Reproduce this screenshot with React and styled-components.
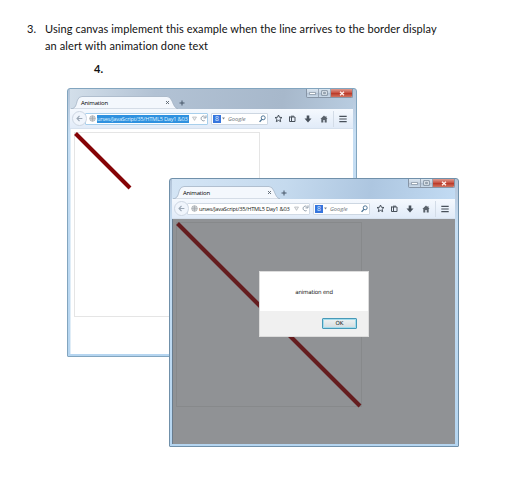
import React from "react";
import styled, { createGlobalStyle } from "styled-components";

const GlobalStyle = createGlobalStyle`
  * { box-sizing: border-box; }
  body { margin: 0; background: #fff; overflow: hidden; }
  svg { display: block; flex: none; }
`;

const Page = styled.main`
  position: relative;
  width: 506px;
  height: 486px;
  background: #fff;
  color: #111;
  font-family: Lato, "Open Sans", sans-serif;
`;

const Question = styled.div`
  display: grid;
  grid-template-columns: 18px 1fr;
  padding: 20px 0 0 27px;
  font-size: 11px;
  line-height: 17px;
  white-space: nowrap;
`;

const Line = styled.div`
  letter-spacing: ${(p) => p.$spacing};
`;

const NextNumber = styled.div`
  padding: 7px 0 0 94px;
  font-size: 11px;
  line-height: 16px;
  font-weight: 700;
`;

const Frame = styled.section`
  position: absolute;
  left: ${(p) => p.$x}px;
  top: ${(p) => p.$y}px;
  width: 290px;
  height: 269px;
  display: flex;
  flex-direction: column;
  padding: 0 3px 2px 2px;
  border: 1px solid ${(p) => (p.$dim ? "#7090aa" : "#82a5bf")};
  border-radius: 3px 3px 1px 1px;
  background: linear-gradient(#b3c5d9 0, #bdd0e4 22px, #c6def3 45px, #b5d5f0 100%);
`;

const TitleBar = styled.header`
  display: flex;
  align-items: flex-end;
  height: 20px;
  flex: none;
  padding-left: 1px;
  background: ${(p) =>
    p.$dim
      ? "linear-gradient(100deg, #d4e5f5 0, #c5daee 40%, #adc6e0 70%, #c2dbf3 100%)"
      : "linear-gradient(100deg, #d3dfea 0, #b2c2d4 30%, #a7b8cb 75%, #b8cce0 100%)"};
`;

const Tab = styled.div`
  position: relative;
  width: 107px;
  height: 13px;
`;

const TabShape = styled.svg`
  position: absolute;
  inset: 0;
`;

const TabContent = styled.div`
  position: relative;
  display: flex;
  align-items: center;
  justify-content: space-between;
  height: 13px;
  padding: 0 8px 0 10px;
`;

const TabTitle = styled.span`
  font: 6px/8px "Open Sans", sans-serif;
  letter-spacing: -0.22px;
  color: #000;
`;

const NewTab = styled.div`
  display: flex;
  align-items: center;
  height: 13px;
  padding-left: 1px;
`;

const Caption = styled.div`
  display: flex;
  align-self: flex-start;
  margin-left: auto;
  height: 9px;
  border: 1px solid #8795a6;
  border-top: 0;
  border-radius: 0 0 2px 2px;
  overflow: hidden;
`;

const CaptionButton = styled.div`
  display: flex;
  align-items: center;
  justify-content: center;
  width: ${(p) => p.$w}px;
  border-right: ${(p) => (p.$close ? 0 : "1px solid #98a5b4")};
  background: ${(p) =>
    p.$close
      ? "linear-gradient(#dd9b90, #c95545 45%, #b83423 50%, #d07561)"
      : "linear-gradient(#dbe5ef, #c5d3e1 48%, #b2c1d3 52%, #cbdbea)"};
`;

const Toolbar = styled.nav`
  display: flex;
  align-items: center;
  height: 20px;
  flex: none;
  padding-left: 2px;
  background: linear-gradient(#f5f9fe, #e1ebf8);
  border-bottom: 1px solid #d6e1ee;
`;

const Back = styled.div`
  position: relative;
  z-index: 1;
  display: flex;
  align-items: center;
  justify-content: center;
  width: 15px;
  height: 15px;
  border: 1px solid #cdd6e2;
  border-radius: 50%;
  background: #f0f5fc;
`;

const Address = styled.div`
  display: flex;
  align-items: center;
  width: 123px;
  height: 12px;
  margin-left: -2px;
  padding-left: 3px;
  border: 1px solid ${(p) => (p.$focused ? "#a7cfec" : "#d1dae5")};
  border-radius: 1px;
  background: #fff;
`;

const Url = styled.span`
  width: 92px;
  height: 8px;
  margin-left: 1px;
  white-space: nowrap;
  font: 5.7px/8px "Open Sans", sans-serif;
  letter-spacing: -0.24px;
  color: ${(p) => (p.$selected ? "#dff1ff" : "#181c20")};
  background: ${(p) => (p.$selected ? "#2f91df" : "transparent")};
`;

const UrlTools = styled.div`
  display: flex;
  align-items: center;
  gap: 3px;
  margin-left: 3px;
`;

const Search = styled.div`
  display: flex;
  align-items: center;
  width: 57px;
  height: 12px;
  margin-left: 3px;
  padding: 0 1px;
  border: 1px solid #cdd7e2;
  border-radius: 1px;
  background: #fff;
`;

const Engine = styled.span`
  width: 8px;
  height: 8px;
  background: #3675dd;
  color: #d5e4ff;
  font: 7px/8px "Liberation Sans", sans-serif;
  text-align: center;
`;

const SearchHint = styled.span`
  flex: 1;
  padding-left: 2px;
  color: #666d74;
  font: italic 5.7px/8px "Open Sans", sans-serif;
`;

const Actions = styled.div`
  display: grid;
  grid-template-columns: 14px 14px 18px 14px 5px 14px;
  align-items: center;
  justify-items: center;
  margin-left: 3px;
  width: 82px;
`;

const Separator = styled.i`
  width: 1px;
  height: 16px;
  background: #d3dce7;
`;

const Viewport = styled.div`
  position: relative;
  flex: 1;
  padding: 3px 0 0 3px;
  border-left: 1px solid ${(p) => (p.$dim ? "#697c8e" : "#e0edf7")};
  background: ${(p) => (p.$dim ? "#909295" : "#fff")};
`;

const Dialog = styled.div`
  position: absolute;
  left: 86px;
  top: 52px;
  width: 110px;
  height: 66px;
  display: flex;
  flex-direction: column;
  background: #fff;
  border: 1px solid #dcdcdc;
  font: 5.6px/8px "DejaVu Sans", sans-serif;
  letter-spacing: -0.22px;
  color: #222;
`;

const Message = styled.div`
  display: flex;
  align-items: center;
  justify-content: center;
  height: 39px;
`;

const DialogFooter = styled.div`
  display: flex;
  flex: 1;
  align-items: center;
  justify-content: flex-end;
  padding: 0 11px 1px 0;
  background: #f0f0f0;
`;

const OkButton = styled.button`
  width: 35px;
  height: 11px;
  padding: 0;
  border: 1px solid #4799b8;
  border-radius: 1px;
  box-shadow: inset 0 0 0 1px #a3dcec;
  background: linear-gradient(#eff2f3, #d5dcdf);
  color: #222;
  font: 5.6px/8px "DejaVu Sans", sans-serif;
`;

const ink = "#48515b";

const BackArrow = () => (
  <svg width="7" height="7" viewBox="0 0 8 8" fill="none" stroke="#9ba7b5" strokeWidth="1.3">
    <path d="M4 1 1.2 4 4 7M1.5 4H7.3" />
  </svg>
);

const Globe = () => (
  <svg width="7" height="7" viewBox="0 0 7 7" fill="none" stroke="#a1a6ab" strokeWidth=".7">
    <circle cx="3.5" cy="3.5" r="2.8" fill="#e6e8ea" />
    <path d="M.7 3.5h5.6M3.5.7v5.6M1.4 1.8c1.4.8 2.8.8 4.2 0M1.4 5.2c1.4-.8 2.8-.8 4.2 0" />
  </svg>
);

const DropMark = () => (
  <svg width="5" height="5" viewBox="0 0 5 5" fill="#eee" stroke="#a5abb1" strokeWidth=".6">
    <path d="M.5 1h4L2.5 4.4z" />
  </svg>
);

const Reload = () => (
  <svg width="7" height="7" viewBox="0 0 7 7" fill="none" stroke="#8b98a6" strokeWidth="1">
    <path d="M4.6 5.6A2.4 2.4 0 1 1 4.6 1.3M6 .4v2.5H3.5" />
  </svg>
);

const Magnifier = () => (
  <svg width="7" height="8" viewBox="0 0 7 8" fill="none" stroke="#4d7596" strokeWidth="1">
    <circle cx="4.2" cy="2.8" r="2" />
    <path d="M2.8 4.4.6 6.9" strokeWidth="1.4" />
  </svg>
);

const Star = () => (
  <svg width="9" height="9" viewBox="0 0 9 9" fill="none" stroke={ink} strokeWidth="1">
    <path d="m4.5 1 1 2.3 2.5.2-1.9 1.7.6 2.5-2.2-1.3-2.2 1.3.6-2.5L1 3.5l2.5-.2z" />
  </svg>
);

const Clipboard = () => (
  <svg width="8" height="8" viewBox="0 0 8 8" fill="none" stroke={ink} strokeWidth="1">
    <path d="M1.5 1.5v5h5.5v-4.5H1.5M3 1.2h3M3.5 2v4.5" />
  </svg>
);

const Download = () => (
  <svg width="8" height="8" viewBox="0 0 8 8" fill={ink}>
    <path d="M2.7.5h2.6v3h2.2L4 7.6.5 3.5h2.2z" />
  </svg>
);

const Home = () => (
  <svg width="8" height="8" viewBox="0 0 8 8" fill="#59616a">
    <path d="M4 .6.4 3.9h.9v3.5h2V5h1.4v2.4h2V3.9h.9L6.5 2.7V1.2h-1v.7z" />
  </svg>
);

const Menu = () => (
  <svg width="8" height="8" viewBox="0 0 8 8" stroke={ink} strokeWidth="1.2">
    <path d="M.3 1.4h7.4M.3 4h7.4M.3 6.6h7.4" />
  </svg>
);

function CanvasDrawing({ end, dim }) {
  return (
    <svg width="186" height="186" viewBox="0 0 186 186">
      <rect x=".5" y=".5" width="185" height="184" fill="none" stroke={dim ? "#87898b" : "#e5e5e5"} />
      <path d={`M1.5 1.5 ${end} ${end}`} stroke={dim ? "#651d1f" : "#850306"} strokeWidth="4" />
    </svg>
  );
}

function BrowserWindow({ x, y, end, dim, children }) {
  return (
    <Frame $x={x} $y={y} $dim={dim}>
      <TitleBar $dim={dim}>
        <Tab>
          <TabShape width="107" height="13" viewBox="0 0 107 13">
            <path
              d="M0 13C5 12 5 9 6.5 4Q8 .5 11 .5H96Q99 .5 101 5C103 10 104 12 107 13Z"
              fill="#f4f8fd"
              stroke="#9cacbf"
              strokeWidth=".7"
            />
          </TabShape>
          <TabContent>
            <TabTitle>Animation</TabTitle>
            <svg width="5" height="5" viewBox="0 0 5 5" stroke="#59636e" strokeWidth=".9">
              <path d="m1 1 3 3M4 1 1 4" />
            </svg>
          </TabContent>
        </Tab>
        <NewTab>
          <svg width="6" height="6" viewBox="0 0 6 6" stroke="#465668" strokeWidth="1">
            <path d="M3 .5v5M.5 3h5" />
          </svg>
        </NewTab>
        <Caption>
          <CaptionButton $w={12}>
            <svg width="7" height="4" viewBox="0 0 7 4" fill="#fff" stroke="#6f7e8e" strokeWidth=".6">
              <path d="M.5 1.5h6v2h-6z" />
            </svg>
          </CaptionButton>
          <CaptionButton $w={12}>
            <svg width="7" height="6" viewBox="0 0 7 6" fill="#eef4fa" stroke="#6f7e8e" strokeWidth=".8">
              <path d="M.7.7h5.6v4.6H.7zM2.6 2.3h1.8v1.4H2.6z" />
            </svg>
          </CaptionButton>
          <CaptionButton $w={21} $close>
            <svg width="6" height="5" viewBox="0 0 6 5" stroke="#fff2ee" strokeWidth="1.3">
              <path d="m1 .7 4 3.6M5 .7 1 4.3" />
            </svg>
          </CaptionButton>
        </Caption>
      </TitleBar>
      <Toolbar>
        <Back><BackArrow /></Back>
        <Address $focused={!dim}>
          <Globe />
          <Url $selected={!dim}>urses/JavaScript/35/HTML5 Day1 &amp;03</Url>
          <UrlTools><DropMark /><Reload /></UrlTools>
        </Address>
        <Search>
          <Engine>8</Engine>
          <svg width="5" height="3" viewBox="0 0 5 3" fill="#808890"><path d="M1 .5h3L2.5 2.5z" /></svg>
          <SearchHint>Google</SearchHint>
          <Magnifier />
        </Search>
        <Actions>
          <Star />
          <Clipboard />
          <Download />
          <Home />
          <Separator />
          <Menu />
        </Actions>
      </Toolbar>
      <Viewport $dim={dim}>
        <CanvasDrawing end={end} dim={dim} />
        {children}
      </Viewport>
    </Frame>
  );
}

export default function App() {
  return (
    <Page>
      <GlobalStyle />
      <Question>
        <span>3.</span>
        <div>
          <Line $spacing="0.08px">Using canvas implement this example when the line arrives to the border display</Line>
          <Line $spacing="0.1px">an alert with animation done text</Line>
        </div>
      </Question>
      <NextNumber>4.</NextNumber>
      <BrowserWindow x={67} y={88} end={56} />
      <BrowserWindow x={169} y={178} end={184} dim>
        <Dialog role="alertdialog">
          <Message>animation end</Message>
          <DialogFooter><OkButton>OK</OkButton></DialogFooter>
        </Dialog>
      </BrowserWindow>
    </Page>
  );
}
